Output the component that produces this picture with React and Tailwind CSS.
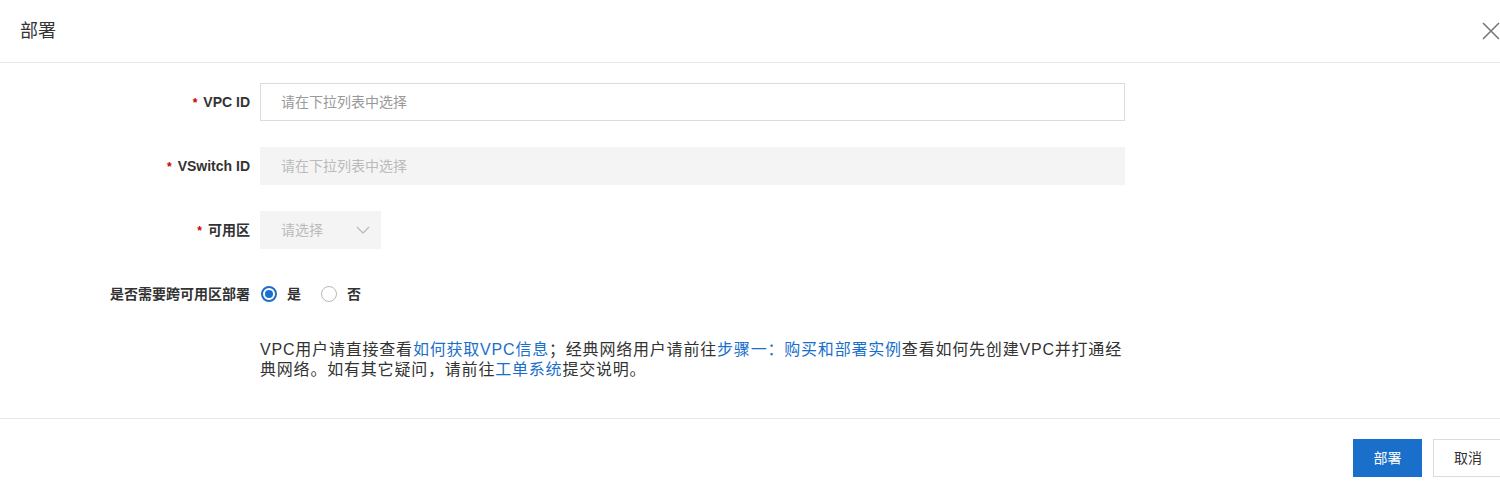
const font = { fontFamily: '"Liberation Sans", "Noto Sans CJK SC", sans-serif' };

function Label({ required, children }) {
  return (
    <div className="w-[260px] shrink-0 pr-[10px] text-right text-[14px] font-bold text-[#333]">
      {required && <span className="mr-[6px] text-[12px] text-[#c80000]">*</span>}
      {children}
    </div>
  );
}

function Radio({ checked, label }) {
  return (
    <label className="flex items-center">
      <span
        className={
          checked
            ? "flex h-[16px] w-[16px] items-center justify-center rounded-full border-2 border-[#1a6fca] bg-white"
            : "flex h-[16px] w-[16px] items-center justify-center rounded-full border border-[#b8b8b8] bg-white"
        }
      >
        {checked && <span className="h-[8px] w-[8px] rounded-full bg-[#1a6fca]" />}
      </span>
      <span className="ml-[10px] text-[14px] font-bold text-[#333]">{label}</span>
    </label>
  );
}

export default function App() {
  return (
    <div className="h-[485px] w-[1500px] overflow-hidden bg-white" style={font}>
      <div className="w-[1503px]">
        {/* header */}
        <div className="flex h-[63px] items-center justify-between border-b border-[#e6e6e6] pl-[20px] pr-[3px]">
          <h2 className="text-[18px] text-[#333]">部署</h2>
          <svg width="18" height="18" viewBox="0 0 18 18" className="text-[#777]">
            <path d="M1 1 L17 17 M17 1 L1 17" stroke="currentColor" strokeWidth="1.6" fill="none" />
          </svg>
        </div>

        {/* form */}
        <div className="pt-[20px]">
          <div className="mb-[26px] flex items-center">
            <Label required>VPC ID</Label>
            <div className="flex h-[38px] w-[865px] items-center border border-[#dcdcdc] px-[20px] text-[14px] text-[#999]">
              请在下拉列表中选择
            </div>
          </div>

          <div className="mb-[26px] flex items-center">
            <Label required>VSwitch ID</Label>
            <div className="flex h-[38px] w-[865px] items-center bg-[#f4f4f4] px-[21px] text-[14px] text-[#bbb]">
              请在下拉列表中选择
            </div>
          </div>

          <div className="mb-[26px] flex items-center">
            <Label required>可用区</Label>
            <div className="flex h-[38px] w-[121px] items-center justify-between bg-[#f4f4f4] pl-[21px] pr-[11px] text-[14px] text-[#bbb]">
              请选择
              <svg width="14" height="8" viewBox="0 0 14 8">
                <path d="M1 1 L7 7 L13 1" stroke="#bbb" strokeWidth="1.3" fill="none" />
              </svg>
            </div>
          </div>

          <div className="flex h-[38px] items-center">
            <Label>是否需要跨可用区部署</Label>
            <div className="flex items-center gap-[20px] pl-[1px]">
              <Radio checked label="是" />
              <Radio label="否" />
            </div>
          </div>

          <div className="mt-[27px] flex">
            <div className="w-[260px] shrink-0" />
            <p className="w-[865px] shrink-0 text-[16px] leading-[20px] tracking-[0.8px] text-[#333]">
              VPC用户请直接查看<a className="text-[#1a6fca]">如何获取VPC信息</a>；经典网络用户请前往<a className="text-[#1a6fca]">步骤一：购买和部署实例</a>查看如何先创建VPC并打通经典网络。如有其它疑问，请前往<a className="text-[#1a6fca]">工单系统</a>提交说明。
            </p>
          </div>
        </div>

        {/* footer */}
        <div className="mt-[38px] flex justify-end gap-[11px] border-t border-[#e6e6e6] pt-[20px]">
          <button className="h-[38px] w-[69px] bg-[#1a6fca] text-[14px] text-white">部署</button>
          <button className="h-[38px] w-[70px] border border-[#dcdcdc] bg-white text-[14px] text-[#333]">取消</button>
        </div>
      </div>
    </div>
  );
}
